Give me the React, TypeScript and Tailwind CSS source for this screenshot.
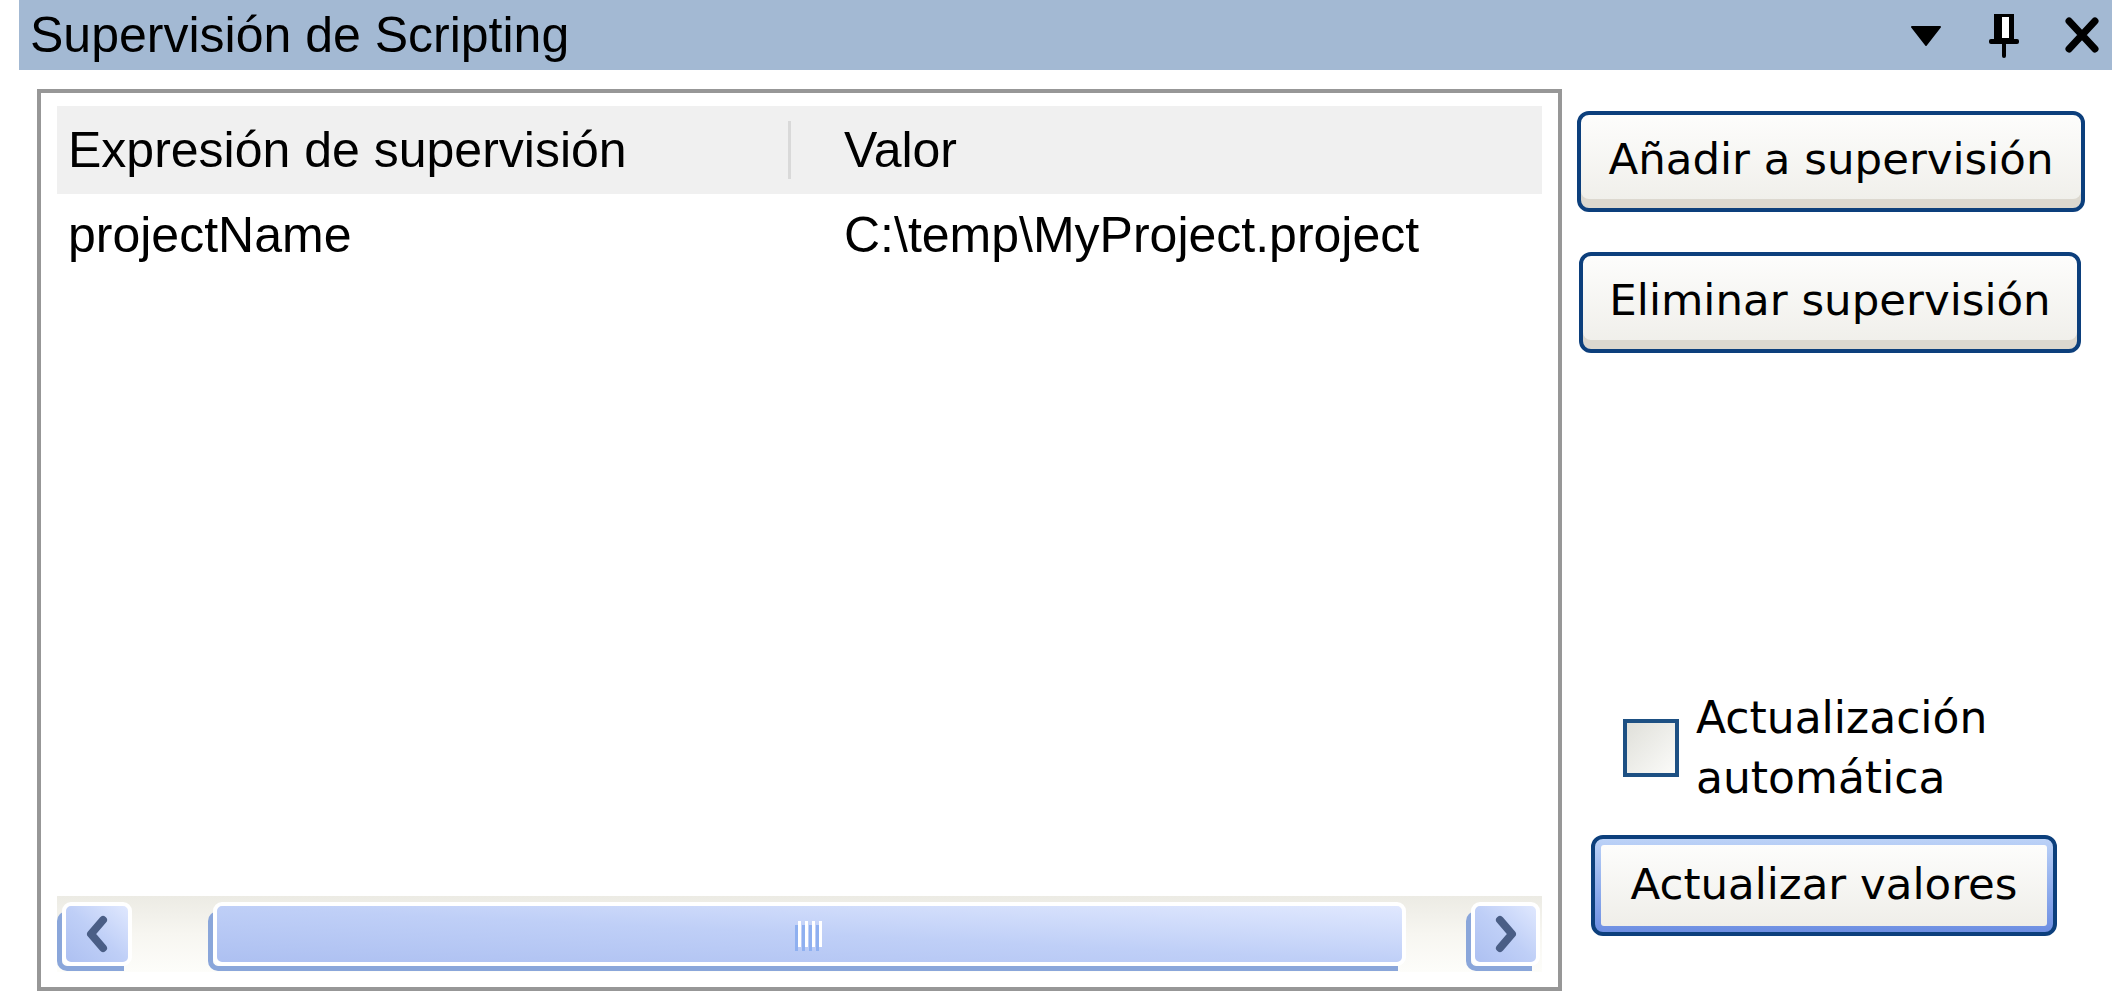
import React from 'react';

const arial = { fontFamily: '"Liberation Sans", Arial, sans-serif' };
const tahoma = { fontFamily: '"DejaVu Sans", Verdana, sans-serif' };

const Chevron = ({ dir }: { dir: 'left' | 'right' }) => (
  <svg width="30" height="40" viewBox="0 0 30 40">
    <polyline
      points={dir === 'left' ? '21,6 9,20 21,34' : '9,6 21,20 9,34'}
      fill="none"
      stroke="#4a5e86"
      strokeWidth="8"
      strokeLinecap="round"
      strokeLinejoin="round"
    />
  </svg>
);

const ScrollPiece = ({ className, children }: { className: string; children?: React.ReactNode }) => (
  <div className={`relative h-[70px] ${className}`}>
    <div className="absolute left-0 bottom-0 right-[8px] h-[60px] rounded-bl-[10px] rounded-tl-[10px] border-l-[5px] border-b-[5px] border-[#8aa6da]" />
    <div className="absolute left-[5px] top-[1px] right-0 bottom-[5px] rounded-[9px] border-[4px] border-white bg-gradient-to-tr from-[#adc0f1] via-[#bfcff7] to-[#e0e8fe] flex items-center justify-center">
      {children}
    </div>
  </div>
);

const Grip = () => (
  <div className="flex gap-[4px]">
    {[0, 1, 2, 3].map((i) => (
      <div key={i} className="w-[3px] h-[26px] bg-white shadow-[-3px_4px_0_#8fb0f0]" />
    ))}
  </div>
);

const Button = ({ label, className }: { label: string; className: string }) => (
  <div
    className={`flex items-center justify-center rounded-[12px] border-[4px] border-[#0c3f7c] bg-gradient-to-b from-[#fdfdfc] to-[#efeee9] shadow-[inset_0_-9px_0_#dcd8cf] text-[43.5px] text-black ${className}`}
    style={tahoma}
  >
    <span className="pb-[4px]">{label}</span>
  </div>
);

export default function App() {
  return (
    <div className="w-[2128px] h-[1008px] bg-white overflow-hidden" style={arial}>
      {/* title bar */}
      <div className="ml-[19px] w-[2093px] h-[70px] bg-[#a3b9d3] flex items-center">
        <span className="ml-[11px] text-[50px] leading-none text-black">Supervisión de Scripting</span>
        <div className="ml-auto flex items-center">
          <svg width="30" height="20" viewBox="0 0 30 20" className="mt-[1px]">
            <polygon points="1,1 29,1 15,19" fill="#000" strokeLinejoin="round" stroke="#000" strokeWidth="2" />
          </svg>
          <svg width="32" height="46" viewBox="0 0 32 46" className="ml-[48px]">
            <rect x="5" y="2" width="20" height="26" fill="#000" />
            <rect x="13" y="5" width="7" height="21" fill="#fff" />
            <rect x="0" y="27" width="30" height="5" rx="2" fill="#000" />
            <rect x="13" y="30" width="4" height="16" rx="2" fill="#000" />
          </svg>
          <svg width="34" height="36" viewBox="0 0 34 36" className="ml-[44px] mr-[13px]">
            <path d="M4 4 L30 32 M30 4 L4 32" stroke="#000" strokeWidth="7" strokeLinecap="round" />
          </svg>
        </div>
      </div>

      <div className="flex mt-[19px]">
        {/* watch list */}
        <div className="ml-[37px] w-[1525px] h-[902px] border-[4px] border-[#979797] pt-[13px] px-[16px] pb-[15px] flex flex-col">
          <div className="h-[88px] bg-[#f0f0f0] flex items-center text-[50px] text-black">
            <span className="pl-[11px] w-[731px]">Expresión de supervisión</span>
            <div className="w-[3px] h-[58px] bg-[#d9d9d9]" />
            <span className="pl-[53px]">Valor</span>
          </div>
          <div className="flex text-[50px] text-black pt-[4px]">
            <span className="pl-[11px] w-[734px]">projectName</span>
            <span className="pl-[53px]">C:\temp\MyProject.project</span>
          </div>
          <div className="flex-1" />
          {/* horizontal scrollbar */}
          <div className="h-[76px] bg-gradient-to-b from-[#ecebe4] via-[#f7f6f1] to-[#fdfdfa] flex items-end pb-[1px]">
            <ScrollPiece className="w-[75px]">
              <Chevron dir="left" />
            </ScrollPiece>
            <ScrollPiece className="ml-[76px] w-[1198px]">
              <Grip />
            </ScrollPiece>
            <ScrollPiece className="ml-[60px] w-[74px]">
              <Chevron dir="right" />
            </ScrollPiece>
          </div>
        </div>

        {/* right column */}
        <div className="ml-[15px] flex flex-col">
          <Button label="Añadir a supervisión" className="w-[508px] h-[101px] mt-[22px]" />
          <Button label="Eliminar supervisión" className="ml-[2px] w-[502px] h-[101px] mt-[40px]" />
          <div className="flex items-center ml-[46px] mt-[335px]">
            <div className="w-[56px] h-[58px] border-[4px] border-[#1d5083] bg-gradient-to-br from-[#e0e0da] to-[#fbfbf9]" />
            <div className="ml-[17px] text-[44px] leading-[60px] text-black" style={tahoma}>
              Actualización
              <br />
              automática
            </div>
          </div>
          <div className="ml-[14px] mt-[27px] w-[466px] h-[101px] rounded-[12px] border-[4px] border-[#0c3f7c] bg-gradient-to-b from-[#bcd2f7] to-[#6d8ee2] p-[6px]">
            <div
              className="w-full h-full rounded-[3px] bg-gradient-to-b from-[#fdfdfc] to-[#efeee9] flex items-center justify-center text-[43.5px] text-black"
              style={tahoma}
            >
              <span className="pb-[2px]">Actualizar valores</span>
            </div>
          </div>
        </div>
      </div>
    </div>
  );
}
